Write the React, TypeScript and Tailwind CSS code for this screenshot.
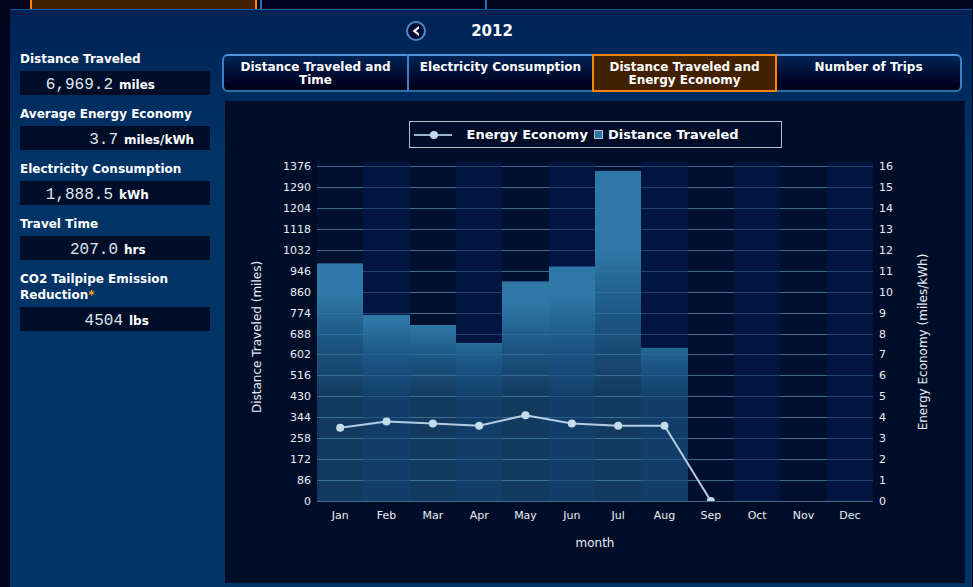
const stats = [
  { label: "Distance Traveled", value: "6,969.2", unit: "miles", width: "w-[93px]" },
  { label: "Average Energy Economy", value: "3.7", unit: "miles/kWh", width: "w-[98px]" },
  { label: "Electricity Consumption", value: "1,888.5", unit: "kWh", width: "w-[93px]" },
  { label: "Travel Time", value: "207.0", unit: "hrs", width: "w-[98px]" },
  { label: "CO2 Tailpipe Emission Reduction", value: "4504", unit: "lbs", width: "w-[103px]", note: true },
];

const tabs = [
  "Distance Traveled and Time",
  "Electricity Consumption",
  "Distance Traveled and Energy Economy",
  "Number of Trips",
];

const months = [
  { name: "Jan", miles: 976, economy: 3.5 },
  { name: "Feb", miles: 764, economy: 3.8 },
  { name: "Mar", miles: 723, economy: 3.7 },
  { name: "Apr", miles: 649, economy: 3.6 },
  { name: "May", miles: 902, economy: 4.1 },
  { name: "Jun", miles: 963, economy: 3.7 },
  { name: "Jul", miles: 1356, economy: 3.6 },
  { name: "Aug", miles: 629, economy: 3.6 },
  { name: "Sep", miles: 0, economy: 0 },
  { name: "Oct", miles: 0, economy: null },
  { name: "Nov", miles: 0, economy: null },
  { name: "Dec", miles: 0, economy: null },
];

// Plot geometry in viewBox units
const LEFT = 92;
const RIGHT = 648;
const BASE = 353;
const PLOT_H = 335;
const COL = (RIGHT - LEFT) / 12;

const colX = (i: number) => Math.round(LEFT + i * COL);
const midX = (i: number) => LEFT + (i + 0.5) * COL;
const milesY = (v: number) => BASE - (v / 1376) * PLOT_H;
const economyY = (v: number) => BASE - (v / 16) * PLOT_H;
const gridY = (v: number) => Math.round(economyY(v)) + 0.5;

// Taller bars stay solid for longer, all of them fade out at the same level
const fadeStart = (v: number) => BASE - 92 - (BASE - milesY(v)) * 0.48;
const FADE_END = 249;

function Chart() {
  const ticks = Array.from({ length: 17 }, (_, i) => i);
  const points = months.flatMap((m, i) =>
    m.economy === null ? [] : [{ x: midX(i), y: economyY(m.economy) }],
  );
  const bars = months.map((m, i) => ({ ...m, i })).filter((m) => m.miles > 0);

  return (
    <svg viewBox="0 0 740 435" className="block w-full fill-[#e8eef5] text-[11px]">
      <defs>
        <clipPath id="plot">
          <rect x={LEFT} y="0" width={RIGHT - LEFT} height={BASE} />
        </clipPath>
        {bars.map((m) => (
          <linearGradient
            key={m.name}
            id={`bar-${m.name}`}
            gradientUnits="userSpaceOnUse"
            x1="0"
            y1={fadeStart(m.miles)}
            x2="0"
            y2={FADE_END}
          >
            <stop offset="0" stopColor="#2d78a7" />
            <stop offset="0.5" stopColor="#24699a" stopOpacity="0.75" />
            <stop offset="1" stopColor="#2d78a7" stopOpacity="0.4" />
          </linearGradient>
        ))}
      </defs>

      <rect x={LEFT} y="14" width={RIGHT - LEFT} height={BASE - 14} fill="#00102e" />

      {ticks.map((t) => (
        <g key={t}>
          <line x1={LEFT} x2={RIGHT} y1={gridY(t)} y2={gridY(t)} stroke="#42698a" />
          <text x="86" y={economyY(t) + 4} textAnchor="end">
            {t * 86}
          </text>
          <text x="654" y={economyY(t) + 4}>
            {t}
          </text>
        </g>
      ))}

      {/* Every second month gets a lighter band */}
      {months.map((m, i) =>
        i % 2 ? (
          <rect
            key={m.name}
            x={colX(i)}
            y="14"
            width={colX(i + 1) - colX(i)}
            height={BASE - 14}
            fill="#001c52"
            opacity="0.5"
          />
        ) : null,
      )}

      {bars.map((m) => (
        <rect
          key={m.name}
          x={colX(m.i)}
          y={milesY(m.miles)}
          width={colX(m.i + 1) - colX(m.i)}
          height={BASE - milesY(m.miles)}
          fill={`url(#bar-${m.name})`}
        />
      ))}

      <g clipPath="url(#plot)">
        <polyline
          points={points.map((p) => `${p.x},${p.y}`).join(" ")}
          fill="none"
          stroke="#b4cde2"
          strokeWidth="2"
        />
        {points.map((p) => (
          <circle key={p.x} cx={p.x} cy={p.y} r="4" fill="#c5dcec" />
        ))}
      </g>

      {months.map((m, i) => (
        <text key={m.name} x={midX(i)} y="371" textAnchor="middle">
          {m.name}
        </text>
      ))}

      <g className="text-[12px]">
        <text x="370" y="399" textAnchor="middle">
          month
        </text>
        <text transform="translate(36 189) rotate(-90)" textAnchor="middle">
          Distance Traveled (miles)
        </text>
        <text transform="translate(702 194) rotate(-90)" textAnchor="middle">
          Energy Economy (miles/kWh)
        </text>
      </g>
    </svg>
  );
}

export default function App() {
  return (
    <div className="min-h-screen bg-[#00041d] pl-[10px] pr-px font-['DejaVu_Sans',sans-serif] text-white flex flex-col">
      {/* Bottom edge of the main tabs */}
      <div className="flex h-[9px] gap-[3px] pl-5">
        <div className="w-[227px] border-x-2 border-[#ff8400] bg-[#422103]" />
        <div className="w-[227px] border-x-2 border-[#2a6fa9] bg-[#00001f]" />
      </div>

      <div className="flex-1 flex border-t border-[#075a96] bg-[linear-gradient(#002255,#003366_140px)] pl-[10px] pr-[7px] pb-1">
        {/* Totals */}
        <dl className="w-[190px] shrink-0 pt-[41px] text-[12px] font-bold leading-4">
          {stats.map((s) => (
            <div key={s.label} className="mb-[11px]">
              <dt>
                {s.label}
                {s.note && <span className="text-[#f5a81c]">*</span>}
              </dt>
              <dd className="mt-1 flex h-6 items-baseline gap-[6px] bg-[#000d29] leading-7">
                <span
                  className={`${s.width} text-right font-['Liberation_Mono',monospace] text-[16px] font-normal text-[#dfe6f0]`}
                >
                  {s.value}
                </span>
                <span>{s.unit}</span>
              </dd>
            </div>
          ))}
        </dl>

        <div className="min-w-0 flex-1 pl-3">
          <div className="flex h-[42px] mb-[2px] items-center justify-center pr-[268px]">
            <button
              aria-label="Previous year"
              className="mr-[45px] flex size-5 items-center justify-center rounded-full border-2 border-[#4a8cd0] bg-[#000d33]"
            >
              <svg viewBox="0 0 10 12" className="h-3 w-[10px] shrink-0">
                <path d="M8 1 1.5 6 8 11V8.500L5 6 8 3.500Z" fill="white" />
              </svg>
            </button>
            <h1 className="text-[15px] font-bold">2012</h1>
          </div>

          <div className="mr-[3px] grid h-[38px] grid-cols-4 text-[12px] font-bold leading-[13px]">
            {tabs.map((t, i) => (
              <button
                key={t}
                className={
                  i === 2
                    ? "border-2 border-[#ff8400] bg-[#422103] px-3 pt-[5px] flex items-start justify-center"
                    : "border-y-2 border-l-2 border-t-[#4f93da] border-b-[#2a6fa9] border-l-[#3c80c0] border-r-[#3c80c0] bg-[linear-gradient(#002457,#00001f_85%)] pt-[5px] flex items-start justify-center first:rounded-l-md first:px-3 last:rounded-r-md last:border-l-0 last:border-r-2"
                }
              >
                {t}
              </button>
            ))}
          </div>

          <div className="ml-[3px] mt-[9px] bg-[#000d29] pt-5">
            <div className="mx-auto flex h-[27px] w-[373px] items-center border border-[#b9bfcc] pl-[3px] text-[13px] font-bold">
              <svg viewBox="0 0 40 10" className="mr-[14px] h-[10px] w-10">
                <path d="M1 5h38" stroke="#9fb4ca" strokeWidth="2" />
                <circle cx="21" cy="5" r="4" fill="#c5dcec" />
              </svg>
              <span>Energy Economy</span>
              <span className="ml-[6px] mr-[5px] size-[9px] border border-[#b9bfcc] bg-[#2d78a7]" />
              <span>Distance Traveled</span>
            </div>
            <Chart />
          </div>
        </div>
      </div>
    </div>
  );
}
